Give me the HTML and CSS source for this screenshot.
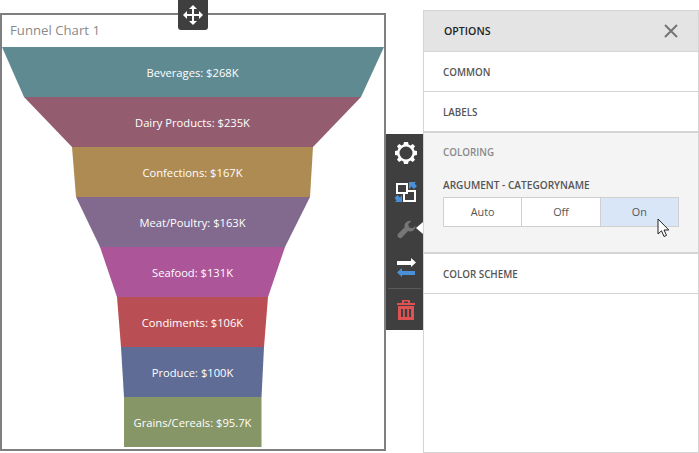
FILE: index.html

```html
<!DOCTYPE html>
<html lang="en">
<head>
    <meta charset="UTF-8">
    <meta name="viewport" content="width=device-width, initial-scale=1.0">
    <title>Funnel Chart Options</title>
    <link rel="stylesheet" href="styles.css">
</head>
<body>
    <div class="page">
        <div class="chart-item">
            <div class="chart-title">Funnel Chart 1</div>
            <svg class="funnel" width="382" height="400" viewBox="0 0 382 400">
                <g transform="translate(-2 -47)">
                    <polygon fill="#5f8a92" points="2,47 384,47 361,97 24,97"/>
                    <polygon fill="#945c6f" points="24,97 361,97 313,147 72,147"/>
                    <polygon fill="#ae8b53" points="72,147 313,147 310,197 76,197"/>
                    <polygon fill="#826a8e" points="76,197 310,197 285,247 100,247"/>
                    <polygon fill="#ac5599" points="100,247 285,247 268,297 117,297"/>
                    <polygon fill="#b94f55" points="117,297 268,297 264,347 121,347"/>
                    <polygon fill="#5f6c95" points="121,347 264,347 261.5,397 124,397"/>
                    <polygon fill="#869666" points="124,397 261.5,397 261.5,447 124,447"/>
                    <g class="funnel-labels">
                        <text x="192.5" y="77">Beverages: $268K</text>
                        <text x="192.5" y="127">Dairy Products: $235K</text>
                        <text x="192.5" y="177">Confections: $167K</text>
                        <text x="192.5" y="227">Meat/Poultry: $163K</text>
                        <text x="192.5" y="277">Seafood: $131K</text>
                        <text x="192.5" y="327">Condiments: $106K</text>
                        <text x="192.5" y="377">Produce: $100K</text>
                        <text x="192.5" y="427">Grains/Cereals: $95.7K</text>
                    </g>
                </g>
            </svg>
            <div class="move-handle">
                <svg width="20" height="20" viewBox="0 0 20 20">
                    <path fill="#fff" d="M10 0l4 4h-3v5h5V6l4 4-4 4v-3h-5v5h3l-4 4-4-4h3v-5H4v3l-4-4 4-4v3h5V4H6z"/>
                </svg>
            </div>
        </div>

        <div class="toolbar">
            <button class="tool">
                <svg width="24" height="24" viewBox="0 0 24 24">
                    <path fill="#fff" fill-rule="evenodd" d="M10 1h4l.6 2.600 1.900.8 2.300-1.400 2.200 2.200-1.400 2.300.8 1.900 2.600.6v4l-2.600.6-.8 1.900 1.400 2.300-2.200 2.200-2.300-1.400-1.900.8-.6 2.600h-4l-.6-2.600-1.900-.8L5.200 21 3 18.800l1.400-2.300-.8-1.900L1 14v-4l2.600-.6.8-1.900L3 5.200 5.200 3l2.300 1.400 1.900-.8zM12 5.500a6.500 6.500 0 1 0 0 13 6.500 6.500 0 0 0 0-13z"/>
                </svg>
            </button>
            <button class="tool tool-mid">
                <svg width="24" height="24" viewBox="0 0 24 24">
                    <path fill="none" stroke="#fff" stroke-width="2" d="M3 4h10v9H3zM14 11h7v10H10v-7"/>
                    <path fill="#4a90d9" d="M15 2h7l-1.500 1.500L23 6l-3 3-2.500-2.500L15 9zM8 22H1l1.500-1.500L.5 18l3-3L6 17.500 8 15z"/>
                </svg>
            </button>
            <button class="tool tool-mid">
                <svg width="21" height="21" viewBox="0 0 24 24">
                    <path fill="#767676" d="M22.500 6.500a6.500 6.500 0 0 1-8.700 6.200L7 19.800a3 3 0 0 1-4.300 0 3 3 0 0 1 0-4.300l7-7A6.500 6.500 0 0 1 17.500 1L14 4.500l1 4 4 1z"/>
                </svg>
            </button>
            <button class="tool">
                <svg width="24" height="24" viewBox="0 0 24 24">
                    <path fill="#fff" d="M3 6h14V3l5 4.500-5 4.500v-2H3z"/>
                    <path fill="#4a90d9" d="M21 16H8v-3l-5 4.500L8 22v-2h13z"/>
                </svg>
            </button>
            <div class="tool-sep"></div>
            <button class="tool tool-trash">
                <svg width="24" height="24" viewBox="0 0 24 24">
                    <path fill="#e05252" fill-rule="evenodd" d="M8 2h8v3h5v2H3V5h5zM10 3.500V5h4V3.500zM4 8h16v14H4zM7 11v8h2v-8zM10.800 11v8h2.400v-8zM15 11v8h2v-8z"/>
                </svg>
            </button>
            <span class="tool-arrow"></span>
        </div>

        <div class="options">
            <div class="options-head">
                <span>OPTIONS</span>
                <svg width="14" height="14" viewBox="0 0 14 14">
                    <path stroke="#757575" stroke-width="2" d="M1 1l12 12M13 1L1 13"/>
                </svg>
            </div>
            <div class="section">COMMON</div>
            <div class="section section-last">LABELS</div>
            <div class="section-open">
                <div class="section-title">COLORING</div>
                <div class="field-label">ARGUMENT - CATEGORYNAME</div>
                <div class="switch">
                    <span class="switch-item">Auto</span>
                    <span class="switch-item">Off</span>
                    <span class="switch-item switch-on">On</span>
                </div>
                <svg class="cursor" width="13" height="20" viewBox="0 0 13 20">
                    <path fill="#fff" stroke="#222" d="M1 1v15l3.500-3.200L7 18.500l2.500-1.100-2.500-5.400h4.800z"/>
                </svg>
            </div>
            <div class="section">COLOR SCHEME</div>
        </div>
    </div>
</body>
</html>
```

FILE: styles.css

```css
html, body {
    margin: 0;
    height: 453px;
    overflow: hidden;
    background-color: #fff;
}

body {
    font-family: 'Open Sans', sans-serif;
}

.page {
    display: flex;
    align-items: flex-start;
    height: 453px;
}

/* chart */
.chart-item {
    position: relative;
    box-sizing: border-box;
    width: 386px;
    height: 438px;
    margin-top: 13px;
    border: 2px solid #7f7f7f;
}

.chart-title {
    height: 32px;
    padding-left: 8px;
    line-height: 30px;
    font-size: 13.2px;
    color: #8a8a8a;
}

.funnel {
    display: block;
}

.funnel-labels text {
    fill: #fff;
    font-size: 11.2px;
    text-anchor: middle;
}

.move-handle {
    position: absolute;
    top: -15px;
    left: 176px;
    display: flex;
    align-items: center;
    justify-content: center;
    width: 30px;
    height: 30px;
    border-radius: 0 0 3px 3px;
    background-color: #3f3f3f;
}

/* toolbar */
.toolbar {
    position: relative;
    display: flex;
    flex-direction: column;
    align-items: center;
    width: 37px;
    height: 196px;
    margin-top: 134px;
    background-color: #3f3f3f;
}

.tool {
    box-sizing: border-box;
    display: flex;
    align-items: center;
    justify-content: center;
    width: 37px;
    height: 38px;
    padding: 0 0 0 3px;
    border: none;
    background: none;
}

.tool-mid {
    padding-top: 2px;
}

.tool-trash {
    padding-top: 4px;
}

.tool-sep {
    width: 33px;
    height: 1px;
    margin-top: 2px;
    background-color: #5a5a5a;
}

.tool-arrow {
    position: absolute;
    top: 88px;
    right: 0;
    border-top: 6.5px solid transparent;
    border-bottom: 6.5px solid transparent;
    border-right: 7px solid #fff;
}

/* options panel */
.options {
    box-sizing: border-box;
    width: 276px;
    height: 443px;
    margin-top: 10px;
    border: 1px solid #d4d4d4;
    color: #555;
}

.options-head {
    display: flex;
    align-items: center;
    justify-content: space-between;
    height: 40px;
    padding: 0 20px;
    background-color: #e4e4e4;
    border-bottom: 1px solid #d4d4d4;
    font-size: 10.6px;
    font-weight: 600;
    color: #222;
}

.section {
    height: 39px;
    padding-left: 19px;
    line-height: 41px;
    border-bottom: 1px solid #d4d4d4;
    font-size: 9.8px;
    font-weight: 600;
}

.section-last {
    border-bottom-width: 2px;
}

.section-open {
    position: relative;
    box-sizing: border-box;
    height: 121px;
    padding: 13px 19px 0;
    background-color: #f4f4f4;
    border-bottom: 2px solid #d4d4d4;
}

.section-title {
    font-size: 9.8px;
    font-weight: 600;
    color: #888;
}

.field-label {
    margin-top: 19px;
    font-size: 10.1px;
    font-weight: 600;
}

.switch {
    display: flex;
    width: 236px;
    height: 30px;
    margin-top: 5px;
    box-sizing: border-box;
    border: 1px solid #d0d0d0;
    background-color: #fff;
}

.switch-item {
    flex: 1;
    text-align: center;
    line-height: 28px;
    font-size: 10.8px;
    color: #555;
    border-left: 1px solid #d0d0d0;
}

.switch-item:first-child {
    border-left: none;
}

.switch-on {
    background-color: #d8e6f8;
}

.cursor {
    position: absolute;
    top: 85px;
    left: 233px;
}
```
